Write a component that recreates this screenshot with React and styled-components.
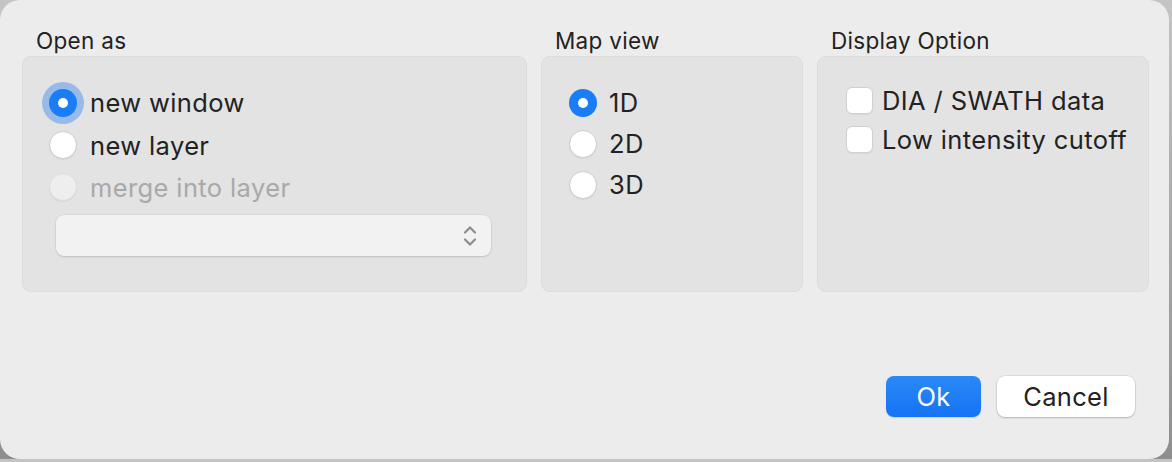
import React, { useState } from 'react'
import styled, { createGlobalStyle } from 'styled-components'

const GlobalStyle = createGlobalStyle`
body{
  margin:0;
  background:linear-gradient(180deg,#c4c4c4 0%,#8e8e8e 100%);
  font-family:Inter,"Noto Sans",sans-serif;
  -webkit-font-smoothing:antialiased;
}
`

const Window = styled.div`
width:1169px;
height:459px;
box-sizing:border-box;
background:#ececec;
border-radius:20px;
padding:28px 0 0 22px;
display:flex;
flex-direction:column;
color:#222;
`

const GroupsRow = styled.div`
display:flex;
gap:14px;
`

const Group = styled.div`
width:${props => props.width}px;
display:flex;
flex-direction:column;
`

const GroupTitle = styled.div`
font-size:22.5px;
line-height:26px;
height:28px;
padding-left:14px;
letter-spacing:0.3px;
`

const GroupBox = styled.div`
height:236px;
box-sizing:border-box;
background:#e3e3e3;
border:1px solid #dcdcdc;
border-radius:9px;
padding:${props => props.pad};
display:flex;
flex-direction:column;
`

const OptionRow = styled.label`
display:flex;
align-items:center;
gap:${props => props.gap || 13}px;
height:${props => props.h}px;
font-size:25.5px;
letter-spacing:0.38px;
color:${props => props.disabled ? '#a9a9a9' : '#222'};
`

const Radio = styled.span`
position:relative;
width:28px;
height:28px;
box-sizing:border-box;
border-radius:50%;
flex-shrink:0;
background:${props => props.checked ? '#1b7df6' : props.disabled ? '#eeeeee' : '#ffffff'};
border:${props => props.checked ? 'none' : props.disabled ? '1px solid #dedede' : '1px solid #cdcdcd'};
box-shadow:${props => props.focus ? '0 0 0 7px rgba(40,125,240,0.4)' : props.checked ? 'none' : '0 1px 1px rgba(0,0,0,0.06)'};

&::after{
  content:'';
  display:${props => props.checked ? 'block' : 'none'};
  position:absolute;
  left:9px;
  top:9px;
  width:10px;
  height:10px;
  border-radius:50%;
  background:#fff;
}
`

const Checkbox = styled.span`
width:27px;
height:27px;
box-sizing:border-box;
border-radius:6px;
flex-shrink:0;
background:#fff;
border:1px solid #d0d0d0;
box-shadow:0 1px 1px rgba(0,0,0,0.05);
`

const Select = styled.div`
margin:7px 0 0 7px;
width:435px;
height:41px;
box-sizing:border-box;
background:#f2f2f2;
border-radius:8px;
box-shadow:0 0 0 0.5px rgba(0,0,0,0.08), 0 1px 2px rgba(0,0,0,0.12);
display:flex;
align-items:center;
justify-content:flex-end;
padding-right:13px;
`

const ButtonRow = styled.div`
margin-top:auto;
display:flex;
justify-content:flex-end;
gap:16px;
padding:0 34px 42px 0;
`

const Button = styled.button`
height:41px;
width:${props => props.width}px;
border-radius:8px;
border:none;
font-family:inherit;
font-size:25.5px;
letter-spacing:0.3px;
padding:0;
color:${props => props.primary ? '#fff' : '#222'};
background:${props => props.primary ? 'linear-gradient(180deg,#2a89f7 0%,#1673f4 100%)' : '#fff'};
box-shadow:${props => props.primary ? '0 1px 1px rgba(0,0,0,0.12)' : '0 0 0 0.5px rgba(0,0,0,0.12), 0 1px 2px rgba(0,0,0,0.2)'};
`

const Chevrons = () => (
  <svg width="16" height="24" viewBox="0 0 16 24" fill="none" stroke="#8c8c8c" strokeWidth="2.2" strokeLinecap="round" strokeLinejoin="round">
    <path d="M3 8.5 L8 3.5 L13 8.5" />
    <path d="M3 15.5 L8 20.5 L13 15.5" />
  </svg>
)

const App = () => {
  const [openAs, setOpenAs] = useState('window')
  const [view, setView] = useState('1D')

  return (
    <>
      <GlobalStyle />
      <Window>
        <GroupsRow>
          <Group width={505}>
            <GroupTitle>Open as</GroupTitle>
            <GroupBox pad="24px 0 0 26px">
              <OptionRow h={43} onClick={() => setOpenAs('window')}>
                <Radio checked={openAs === 'window'} focus />
                new window
              </OptionRow>
              <OptionRow h={42} onClick={() => setOpenAs('layer')}>
                <Radio checked={openAs === 'layer'} />
                new layer
              </OptionRow>
              <OptionRow h={42} disabled>
                <Radio disabled />
                merge into layer
              </OptionRow>
              <Select>
                <Chevrons />
              </Select>
            </GroupBox>
          </Group>

          <Group width={262}>
            <GroupTitle>Map view</GroupTitle>
            <GroupBox pad="25px 0 0 27px">
              {['1D', '2D', '3D'].map(v => (
                <OptionRow key={v} h={41} gap={12} onClick={() => setView(v)}>
                  <Radio checked={view === v} />
                  {v}
                </OptionRow>
              ))}
            </GroupBox>
          </Group>

          <Group width={332}>
            <GroupTitle>Display Option</GroupTitle>
            <GroupBox pad="24px 0 0 28px">
              <OptionRow h={39} gap={9}>
                <Checkbox />
                DIA / SWATH data
              </OptionRow>
              <OptionRow h={39} gap={9}>
                <Checkbox />
                Low intensity cutoff
              </OptionRow>
            </GroupBox>
          </Group>
        </GroupsRow>

        <ButtonRow>
          <Button primary width={95}>Ok</Button>
          <Button width={138}>Cancel</Button>
        </ButtonRow>
      </Window>
    </>
  )
}

export default App
